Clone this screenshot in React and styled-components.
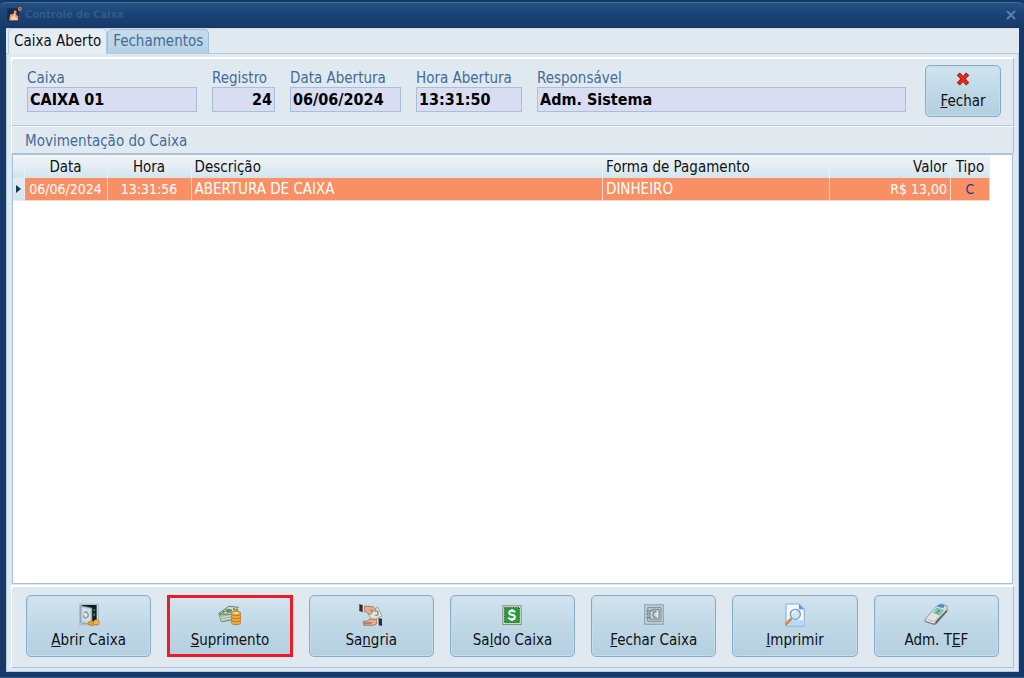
import React, { useState } from "react";
import styled, { createGlobalStyle, css } from "styled-components";

const GlobalStyle = createGlobalStyle`
  * { box-sizing: border-box; }
  body {
    margin: 0;
    background: #173968;
    font-family: "DejaVu Sans Condensed", "DejaVu Sans", sans-serif;
    font-size: 15px;
    line-height: 20px;
    color: #111;
  }
  button, input { font: inherit; color: inherit; }
`;

const Window = styled.div`
  min-height: 100vh;
  display: flex;
  flex-direction: column;
  padding: 0 5px 5px 6px;
  background: #173968;
  border-bottom: 1px solid #2d5b90;
`;

const TitleBar = styled.header`
  display: flex;
  align-items: center;
  gap: 3px;
  height: 28px;
  margin: 0 -5px 0 -6px;
  padding: 0 7px 0 6px;
  border-top: 2px solid #153762;
  border-radius: 6px 6px 0 0;
  box-shadow: inset 0 1px 0 #3c70a3;
  background: linear-gradient(#245384, #1b4377 45%, #173968);
`;

const Title = styled.h1`
  flex: 1;
  margin: 0;
  font-size: 11px;
  font-weight: bold;
  color: #315a8a;
`;

const CloseButton = styled.button`
  display: flex;
  padding: 0;
  border: 0;
  background: none;
  color: #5b7fa9;
`;

const Body = styled.main`
  flex: 1;
  display: flex;
  flex-direction: column;
  border-top: 1px solid #cbdbe8;
  background: #e1e9f0;
`;

const Tabs = styled.div`
  display: flex;
  align-items: flex-end;
  height: 25px;
  padding-left: 2px;
  border-bottom: 1px solid #b0cbe0;
`;

const Tab = styled.button`
  height: ${(p) => (p.$active ? 26 : 24)}px;
  padding: 0 5px 2px;
  margin-bottom: ${(p) => (p.$active ? -1 : 0)}px;
  border: 1px solid ${(p) => (p.$active ? "#b0cbe0" : "#9dc0d8")};
  border-bottom: 0;
  border-radius: 5px 5px 0 0;
  background: ${(p) => (p.$active ? "#e5ecf2" : "linear-gradient(#c6dce9, #b5d1e2)")};
  color: ${(p) => (p.$active ? "#111" : "#426c98")};
`;

const Page = styled.section`
  flex: 1;
  display: flex;
  flex-direction: column;
  padding: 3px 4px;
  border: 1px solid #b0cbe0;
  border-top: 0;
`;

const Panel = styled.div`
  border-top: 2px solid #fff;
  border-left: 1px solid #fff;
  border-right: 1px solid #a6c2d9;
`;

const Summary = styled(Panel)`
  display: flex;
  align-items: flex-start;
  gap: 15px;
  padding: 6px 12px 8px 15px;
  border-bottom: 1px solid #b0c9dd;
`;

const Field = styled.div`
  display: flex;
  flex-direction: column;
  padding-top: 4px;
  width: ${(p) => (p.$width ? `${p.$width}px` : "auto")};
  flex: ${(p) => (p.$width ? "none" : 1)};
  margin-right: ${(p) => (p.$width ? 0 : 4)}px;

  label {
    line-height: 18px;
    white-space: nowrap;
    color: #426c98;
  }

  input {
    width: 100%;
    height: 25px;
    padding: 0 2px;
    border: 1px solid #a5c1da;
    background: #d8ddf1;
    font-size: 16px;
    font-weight: bold;
    color: #000;
    text-align: ${(p) => p.$align || "left"};
  }
`;

const ActionButton = styled.button`
  display: flex;
  flex-direction: column;
  align-items: center;
  justify-content: space-between;
  min-width: 76px;
  padding: 7px 4px 6px;
  border: 1px solid #84adca;
  border-radius: 5px;
  background: linear-gradient(#d2e4ef, #bfd8e6 50%, #b4cfe1);
  box-shadow: inset 0 0 0 1px #c6dce9;

  ${(p) =>
    p.$compact
      ? css`height: 52px; padding: 5px 4px;`
      : css`height: 62px;`}

  ${(p) =>
    p.$highlighted &&
    css`
      padding: 5px 2px 4px;
      border: 3px solid #ed1c24;
      border-radius: 0;
      box-shadow: none;
    `}
`;

const SectionTitle = styled.h2`
  margin: 0;
  padding: 4px 13px;
  height: 27px;
  border-top: 1px solid #f6f9fb;
  border-left: 1px solid #fff;
  border-right: 1px solid #a6c2d9;
  font-size: inherit;
  font-weight: normal;
  color: #426c98;
`;

const Grid = styled.div`
  flex: 1;
  min-height: 120px;
  padding-right: 22px;
  margin: 0 1px;
  border: 1px solid #a5c1da;
  border-top: 2px solid #a9c4da;
  background: #fff;
`;

const Table = styled.table`
  width: 100%;
  table-layout: fixed;
  border-collapse: collapse;

  th, td {
    padding: 0 3px;
    height: 22px;
    text-align: left;
    font-weight: normal;
    white-space: nowrap;
  }
  th {
    height: 23px;
    border-right: 1px solid #e9f1f6;
    background: linear-gradient(#f0f5f8, #e3edf3 50%, #d3e4ed);
  }
  td {
    border-right: 1px solid #f3d9cd;
    border-bottom: 1px solid #f3d9cd;
    background: #f98f65;
    color: #fff;
  }
  td:first-child {
    padding: 0;
    background: linear-gradient(#e3edf3, #d3e4ed);
    text-align: center;
    border-color: #e3edf3;
  }
  td:first-child svg { display: block; margin: 0 auto; }
`;

const Cell = styled.td`
  && {
    text-align: ${(p) => p.$align || "left"};
    font-size: ${(p) => (p.$align ? 14 : 15)}px;
    ${(p) => p.$color && `color: ${p.$color};`}
  }
`;

const HeadCell = styled.th`
  && { text-align: ${(p) => p.$align || "left"}; }
`;

const Footer = styled(Panel)`
  display: grid;
  grid-template-columns: repeat(7, 1fr);
  gap: 16px;
  margin-top: 1px;
  padding: 8px 14px 10px;
  border-bottom: 1px solid #a6c2d9;
`;

const Icon = ({ children, size = 24 }) => (
  <svg width={size} height={size} viewBox="0 0 72 72" aria-hidden="true">
    {children}
  </svg>
);

const SafeOpenIcon = () => (
  <Icon>
    <path d="M7 2h58v65H7z" fill="#9fb4c4" />
    <path d="M10 5h52v59H10z" fill="#dfe8ed" />
    <path d="M14 6h45v50H14z" fill="#10191e" />
    <path d="M11 8l34 7v49l-34-4z" fill="#bccbd4" stroke="#70828d" strokeWidth="2" />
    <path d="M16 14l24 5v38l-24-3z" fill="#d6dfe4" />
    <path d="M21 30q9-7 12 3t-8 12q-7-2-5-8" fill="none" stroke="#8496a1" strokeWidth="4" />
    <path d="M24 31l5 8" stroke="#f5f8f9" strokeWidth="4" />
    <path d="M52 18v7m0 6v9" stroke="#31966e" strokeWidth="4" />
    <path d="M35 55h29v11H35z" fill="#d48a21" />
    <ellipse cx="43" cy="61" rx="9" ry="7" fill="#ec9f28" stroke="#b0741d" strokeWidth="2" />
    <ellipse cx="58" cy="58" rx="9" ry="8" fill="#f4b544" stroke="#b0741d" strokeWidth="2" />
  </Icon>
);

const CashIcon = () => (
  <Icon>
    <path d="M3 34l7 23 29-5 20-13V20z" fill="#a3b3a0" stroke="#687a68" strokeWidth="2" />
    <path d="M7 44l32-6 19-12M9 51l31-6 18-12" fill="none" stroke="#dfe7d9" strokeWidth="3" />
    <path d="M2 32l30-22 29 3-19 21z" fill="#d5dfcf" stroke="#657b61" strokeWidth="3" />
    <ellipse cx="32" cy="23" rx="10" ry="6" fill="#688c64" />
    <path d="M13 29l7-5m25-4l6-4" stroke="#45834a" strokeWidth="4" />
    <path d="M40 32h28v26H40z" fill="#dc972f" />
    {[58, 49, 40, 31].map((y) => (
      <ellipse key={y} cx="54" cy={y} rx="14" ry="7" fill="#eeaa3c" stroke="#9e6823" strokeWidth="2" />
    ))}
    <ellipse cx="54" cy="30" rx="8" ry="3" fill="#ffe096" />
  </Icon>
);

const HandoverIcon = () => (
  <Icon>
    <path d="M28 34l28-22 13 26-28 16z" fill="#dce5d9" stroke="#7b8b7d" strokeWidth="2" />
    <path d="M49 25q9-3 8 6t-9 5" fill="none" stroke="#78917a" strokeWidth="4" />
    <path d="M1 3l11 4v21L1 24z" fill="#292f36" />
    <path d="M11 7h6v19h-6z" fill="#eceff1" />
    <path d="M16 9l26 2 9 9-6 5-11-5 6 9-8 6-10-8-6-1z" fill="#e9ad87" stroke="#8c5c46" strokeWidth="2" />
    <path d="M58 46l11 1v22l-11-3z" fill="#292f36" />
    <path d="M52 48h6v18h-6z" fill="#eceff1" />
    <path d="M53 49L33 48l-9 6-12 1 3 5 23-1-5 3-21 0 3 5h27l11-4z" fill="#e9ad87" stroke="#8c5c46" strokeWidth="2" />
  </Icon>
);

const BalanceIcon = () => (
  <Icon>
    <path d="M7 7h58v59H7z" fill="#858f7e" />
    <path d="M10 10h52v53H10z" fill="#dfe6d8" />
    <path d="M14 14h44v45H14z" fill="#2a9d40" stroke="#0e5720" strokeWidth="3" strokeDasharray="3 2" />
    <path d="M45 28q-3-5-9-5c-11 0-11 11-1 12 13 1 12 14 0 14q-6 0-10-5M36 18v6m0 24v6" fill="none" stroke="#fff" strokeWidth="6" />
  </Icon>
);

const SafeClosedIcon = () => (
  <Icon>
    <path d="M7 4h58v61H7z" fill="#82959f" />
    <path d="M10 7h52v55H10z" fill="#ccd8df" />
    <path d="M17 13h40v43H17z" fill="#b3c1c9" stroke="#7c8e98" strokeWidth="3" />
    <path d="M24 24h8v-4h19v28H24z" fill="#ccd7dd" stroke="#71838e" strokeWidth="3" />
    <path d="M47 27q-12-5-14 6t13 10" fill="none" stroke="#71838e" strokeWidth="4" />
    <path d="M46 24v20" stroke="#edf3f5" strokeWidth="4" />
    <path d="M12 24h14m-14 9h10m-10 11h14" stroke="#71838e" strokeWidth="3" />
  </Icon>
);

const PreviewIcon = () => (
  <Icon>
    <path d="M9 3h40l15 15v51H9z" fill="#d9ecfc" stroke="#6298cd" strokeWidth="2" />
    <path d="M12 6h34l-2 15 17 3v42H12z" fill="#f1f8ff" />
    <path d="M16 51h45v15H16z" fill="#b6daf7" />
    <path d="M48 3l16 16H48z" fill="#5f9bd8" />
    <circle cx="37" cy="34" r="15" fill="#c9e6fb" stroke="#8497b0" strokeWidth="4" />
    <path d="M28 31q3-8 11-7" fill="none" stroke="#fff" strokeWidth="4" />
    <path d="M25 46L8 64" stroke="#b96a22" strokeWidth="8" />
    <path d="M24 46L8 62" stroke="#f4a34c" strokeWidth="4" />
  </Icon>
);

const TerminalIcon = () => (
  <Icon>
    <path d="M2 48l36-38L52 3l18 6v17L38 62q-4 5-11 3L2 56z" fill="#7b7d78" />
    <path d="M38 9L52 3l18 7-1 10-37 37L3 49z" fill="#d9dad5" stroke="#999c97" strokeWidth="2" />
    <path d="M5 51l22 8 7-2" fill="none" stroke="#f0f0ed" strokeWidth="4" />
    <path d="M39 8l11-5 13 4-5 8-18-4z" fill="#4a8fd0" />
    <path d="M38 16l20 6-10 14-19-7z" fill="#8fd8c0" stroke="#659d92" strokeWidth="2" />
    <path d="M40 22l9 3m-13 2l8 3" stroke="#208f9d" strokeWidth="4" />
    <path d="M24 34l18 6m-23-1l18 6m-23-1l18 6" stroke="#fff" strokeWidth="3" strokeDasharray="4 3" />
    <path d="M35 60l34-38" stroke="#4c5350" strokeWidth="3" />
  </Icon>
);

const CancelIcon = () => (
  <Icon size={16}>
    <path d="M15 13l42 46M57 13L15 59" stroke="#8d1b12" strokeWidth="19" />
    <path d="M17 16l38 41M55 16L17 57" stroke="#e52a13" strokeWidth="13" />
  </Icon>
);

const AppIcon = () => (
  <Icon size={16}>
    <path d="M3 4h58v64H3z" fill="#102e53" stroke="#2c4f77" strokeWidth="3" />
    <path d="M14 61l5-28 14-2 5-16 9 3-1 18 9 4v21z" fill="#f29561" />
    <path d="M21 57l5-16 8 3 6-15 2 17 8 4-2 8z" fill="#ffd2b0" />
    <circle cx="62" cy="9" r="6" fill="#163968" stroke="#e48b5a" strokeWidth="5" />
  </Icon>
);

const fields = [
  { id: "caixa", label: "Caixa", value: "CAIXA 01", width: 170 },
  { id: "registro", label: "Registro", value: "24", width: 63, align: "right" },
  { id: "data", label: "Data Abertura", value: "06/06/2024", width: 111 },
  { id: "hora", label: "Hora Abertura", value: "13:31:50", width: 106 },
  { id: "responsavel", label: "Responsável", value: "Adm. Sistema" },
];

const columns = [
  { label: "Data", width: 83, align: "center" },
  { label: "Hora", width: 84, align: "center" },
  { label: "Descrição" },
  { label: "Forma de Pagamento", width: 227 },
  { label: "Valor", width: 121, align: "right" },
  { label: "Tipo", width: 39, align: "center" },
];

const movements = [
  ["06/06/2024", "13:31:56", "ABERTURA DE CAIXA", "DINHEIRO", "R$ 13,00", "C"],
];

const actions = [
  { label: <><u>A</u>brir Caixa</>, icon: SafeOpenIcon },
  { label: <><u>S</u>uprimento</>, icon: CashIcon, highlighted: true },
  { label: <>Sa<u>n</u>gria</>, icon: HandoverIcon },
  { label: <>Sa<u>l</u>do Caixa</>, icon: BalanceIcon },
  { label: <><u>F</u>echar Caixa</>, icon: SafeClosedIcon },
  { label: <><u>I</u>mprimir</>, icon: PreviewIcon },
  { label: <>Adm. T<u>E</u>F</>, icon: TerminalIcon },
];

export default function App() {
  const [tab, setTab] = useState("Caixa Aberto");
  return (
    <Window>
      <GlobalStyle />
      <TitleBar>
        <AppIcon />
        <Title>Controle de Caixa</Title>
        <CloseButton aria-label="Close">
          <svg width="12" height="12" viewBox="0 0 12 12" aria-hidden="true">
            <path d="M2 2l8 8M10 2l-8 8" stroke="currentColor" strokeWidth="2" />
          </svg>
        </CloseButton>
      </TitleBar>
      <Body>
        <Tabs role="tablist">
          {["Caixa Aberto", "Fechamentos"].map((name) => (
            <Tab key={name} role="tab" aria-selected={tab === name} $active={tab === name} onClick={() => setTab(name)}>
              {name}
            </Tab>
          ))}
        </Tabs>
        <Page>
          <Summary>
            {fields.map((f) => (
              <Field key={f.id} $width={f.width} $align={f.align}>
                <label htmlFor={f.id}>{f.label}</label>
                <input id={f.id} type="text" readOnly value={f.value} />
              </Field>
            ))}
            <ActionButton $compact>
              <CancelIcon />
              <span><u>F</u>echar</span>
            </ActionButton>
          </Summary>
          <SectionTitle>Movimentação do Caixa</SectionTitle>
          <Grid>
            <Table>
              <colgroup>
                <col width="11" />
                {columns.map((c) => <col key={c.label} width={c.width} />)}
              </colgroup>
              <thead>
                <tr>
                  <HeadCell />
                  {columns.map((c) => <HeadCell key={c.label} $align={c.align}>{c.label}</HeadCell>)}
                </tr>
              </thead>
              <tbody>
                {movements.map((row) => (
                  <tr key={row[1]}>
                    <td>
                      <svg width="5" height="8" viewBox="0 0 5 8" aria-hidden="true"><path d="M0 0l5 4-5 4z" fill="#16365f" /></svg>
                    </td>
                    {row.map((value, i) => (
                      <Cell key={columns[i].label} $align={columns[i].align} $color={i === 5 ? "#1c3f9c" : undefined}>
                        {value}
                      </Cell>
                    ))}
                  </tr>
                ))}
              </tbody>
            </Table>
          </Grid>
          <Footer>
            {actions.map(({ label, icon: ActionIcon, highlighted }, i) => (
              <ActionButton key={i} $highlighted={highlighted}>
                <ActionIcon />
                <span>{label}</span>
              </ActionButton>
            ))}
          </Footer>
        </Page>
      </Body>
    </Window>
  );
}
